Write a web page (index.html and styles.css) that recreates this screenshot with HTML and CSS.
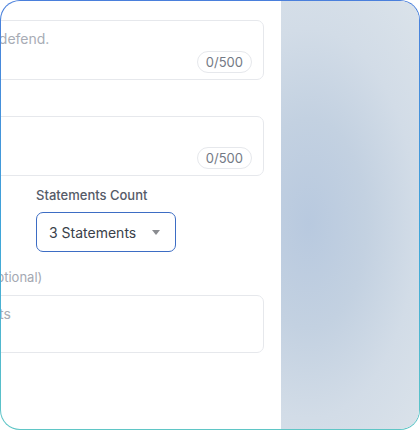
FILE: index.html
```html
<!DOCTYPE html>
<html lang="en">
<head>
    <meta charset="UTF-8">
    <meta name="viewport" content="width=device-width, initial-scale=1.0">
    <title>Debate Builder</title>
    <link rel="stylesheet" href="styles.css">
</head>
<body>
    <div class="card">
        <div class="form-pane">
            <div class="form">
                <div class="field">
                    <div class="textbox">
                        <div class="placeholder">Enter your claim or position you want to defend.</div>
                        <span class="counter">0/500</span>
                    </div>
                </div>
                <div class="field">
                    <div class="label">Context</div>
                    <div class="textbox">
                        <div class="placeholder">Background</div>
                        <span class="counter">0/500</span>
                    </div>
                </div>
                <div class="row">
                    <div class="field field-wide">
                        <div class="label">Tone</div>
                        <div class="select">
                            <span>Neutral</span>
                            <span class="arrow"></span>
                        </div>
                    </div>
                    <div class="field field-small">
                        <div class="label">Statements Count</div>
                        <div class="select active">
                            <span>3 Statements</span>
                            <span class="arrow"></span>
                        </div>
                    </div>
                </div>
                <div class="field">
                    <div class="label">Supporting Facts and Evidence to Include <span class="muted">(Optional)</span></div>
                    <div class="textbox short">
                        <div class="placeholder">Add statistics, data, or any other key facts</div>
                    </div>
                </div>
            </div>
        </div>
        <div class="side-pane"></div>
    </div>
</body>
</html>
```

FILE: styles.css
```css
* {
    box-sizing: border-box;
}

body {
    margin: 0;
    font-family: 'Inter', 'Liberation Sans', sans-serif;
    background: #fff;
}

.card {
    width: 420px;
    height: 430px;
    display: flex;
    border: 1.5px solid transparent;
    border-radius: 20px;
    background: linear-gradient(#fff, #fff) padding-box,
                linear-gradient(180deg, #4a7fdc, #3fa6d9 55%, #5fc6c6) border-box;
    overflow: hidden;
}

.form-pane {
    width: 280px;
    flex-shrink: 0;
    overflow: hidden;
    padding: 19px 17px 0 0;
}

.form {
    margin-left: -281px;
}

.field {
    margin-bottom: 12px;
}

.label {
    font-size: 13px;
    line-height: 18px;
    font-weight: 500;
    color: #555b68;
    margin-bottom: 6px;
    white-space: nowrap;
}

.muted {
    color: #a4a8b2;
    font-weight: 400;
}

.textbox {
    height: 60px;
    border: 1px solid #e6e8ec;
    border-radius: 7px;
    padding: 8px 11px 6px 12px;
    display: flex;
    flex-direction: column;
    justify-content: space-between;
}

.textbox.short {
    height: 58px;
    margin-top: 9px;
}

.placeholder {
    font-size: 14px;
    line-height: 20px;
    color: #a8acb5;
    white-space: nowrap;
}

.counter {
    align-self: flex-end;
    height: 22px;
    line-height: 20px;
    padding: 0 8px;
    font-size: 13px;
    color: #737985;
    border: 1px solid #e6e8ec;
    border-radius: 11px;
}

.row {
    display: flex;
    gap: 46px;
    margin-top: -2px;
}

.field-wide {
    width: 270px;
}

.field-small {
    width: 140px;
}

.row .label {
    margin-bottom: 8px;
}

.row .field {
    margin-bottom: 16px;
}

.select {
    height: 40px;
    border: 1px solid #e6e8ec;
    border-radius: 7px;
    display: flex;
    align-items: center;
    justify-content: space-between;
    padding: 0 15px 0 12px;
    font-size: 14px;
    color: #3a3f4a;
}

.select.active {
    border-color: #3d6dc4;
}

.arrow {
    width: 0;
    height: 0;
    border-left: 4.5px solid transparent;
    border-right: 4.5px solid transparent;
    border-top: 5px solid #8a8c90;
}

.side-pane {
    flex-grow: 1;
    background: radial-gradient(ellipse 120% 70% at 20% 52%, #b8c9df 0%, #c3d1e1 35%, #d2dce7 65%, #dbe3ea 100%);
}
```
